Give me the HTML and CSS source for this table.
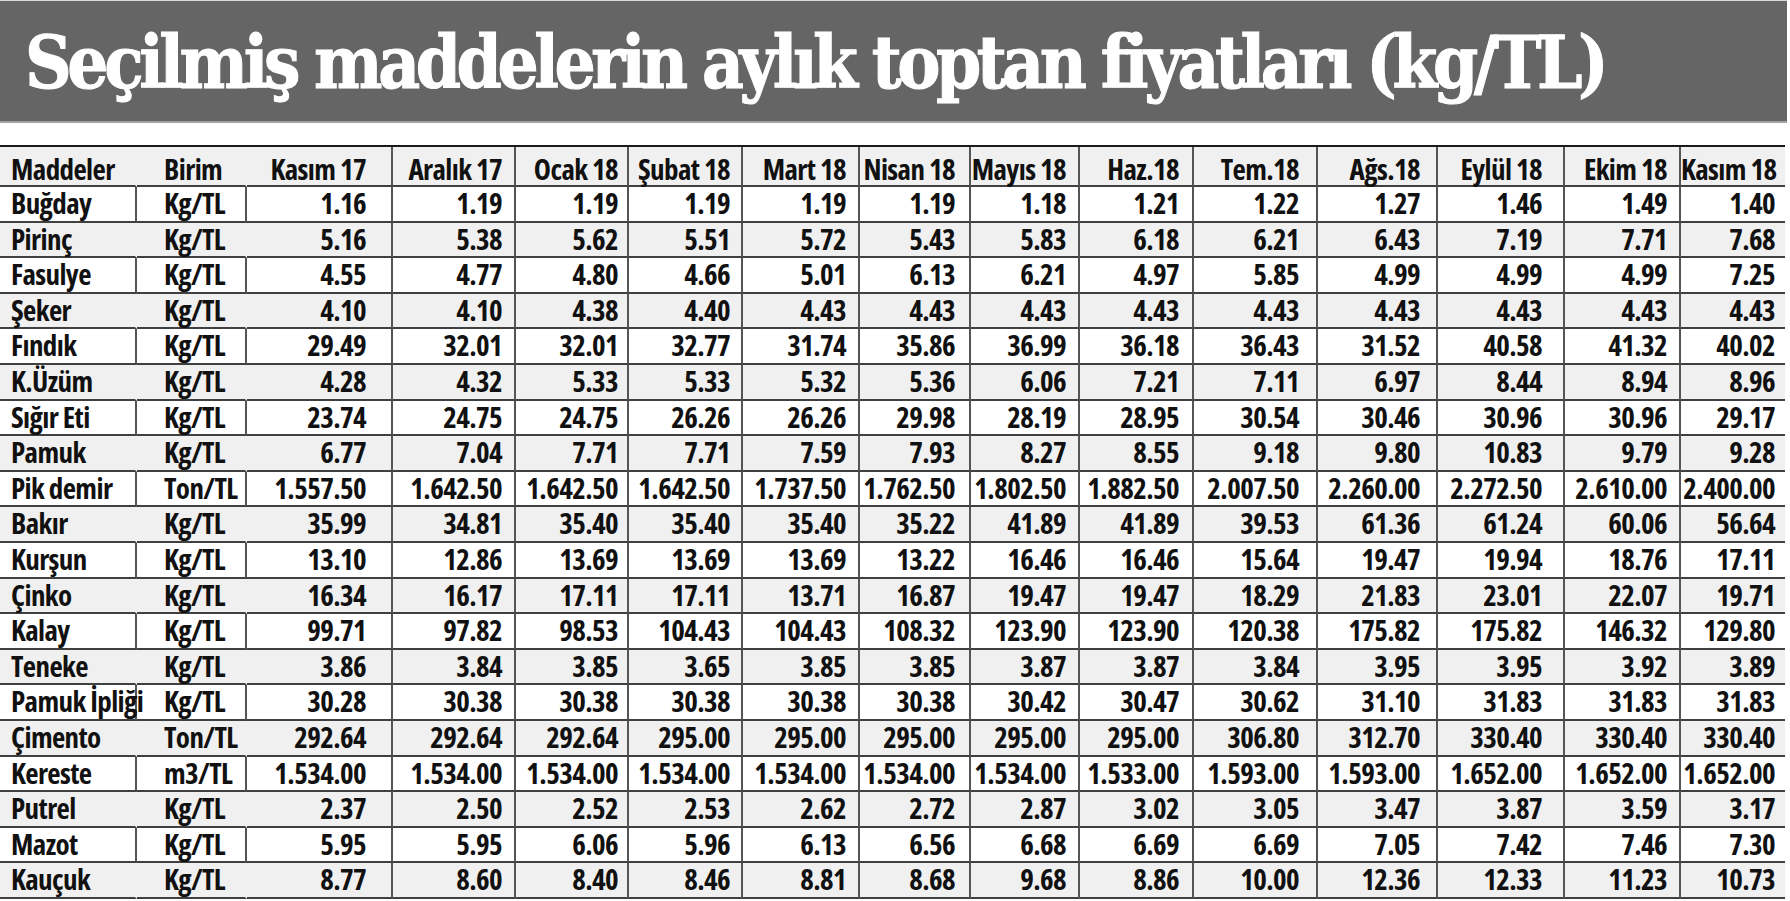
FILE: index.html
```html
<!DOCTYPE html>
<html lang="tr">
<head>
<meta charset="utf-8">
<title>Seçilmiş maddelerin aylık toptan fiyatları (kg/TL)</title>
<link rel="stylesheet" href="styles.css">
</head>
<body>
<div class="page">
  <header class="title-bar">
    <h1 class="title">Seçilmiş maddelerin aylık toptan fiyatları (kg/TL)</h1>
  </header>
  <table class="prices">
    <colgroup>
      <col class="c-name"><col class="c-unit"><col class="c3"><col class="c4"><col class="c5"><col class="c6"><col class="c7"><col class="c8"><col class="c9"><col class="c10"><col class="c11"><col class="c12"><col class="c13"><col class="c14"><col class="c15">
    </colgroup>
    <thead>
      <tr><th>Maddeler</th><th>Birim</th><th>Kasım 17</th><th>Aralık 17</th><th>Ocak 18</th><th>Şubat 18</th><th>Mart 18</th><th>Nisan 18</th><th>Mayıs 18</th><th>Haz.18</th><th>Tem.18</th><th>Ağs.18</th><th>Eylül 18</th><th>Ekim 18</th><th>Kasım 18</th></tr>
    </thead>
    <tbody>
      <tr><td>Buğday</td><td>Kg/TL</td><td>1.16</td><td>1.19</td><td>1.19</td><td>1.19</td><td>1.19</td><td>1.19</td><td>1.18</td><td>1.21</td><td>1.22</td><td>1.27</td><td>1.46</td><td>1.49</td><td>1.40</td></tr>
      <tr><td>Pirinç</td><td>Kg/TL</td><td>5.16</td><td>5.38</td><td>5.62</td><td>5.51</td><td>5.72</td><td>5.43</td><td>5.83</td><td>6.18</td><td>6.21</td><td>6.43</td><td>7.19</td><td>7.71</td><td>7.68</td></tr>
      <tr><td>Fasulye</td><td>Kg/TL</td><td>4.55</td><td>4.77</td><td>4.80</td><td>4.66</td><td>5.01</td><td>6.13</td><td>6.21</td><td>4.97</td><td>5.85</td><td>4.99</td><td>4.99</td><td>4.99</td><td>7.25</td></tr>
      <tr><td>Şeker</td><td>Kg/TL</td><td>4.10</td><td>4.10</td><td>4.38</td><td>4.40</td><td>4.43</td><td>4.43</td><td>4.43</td><td>4.43</td><td>4.43</td><td>4.43</td><td>4.43</td><td>4.43</td><td>4.43</td></tr>
      <tr><td>Fındık</td><td>Kg/TL</td><td>29.49</td><td>32.01</td><td>32.01</td><td>32.77</td><td>31.74</td><td>35.86</td><td>36.99</td><td>36.18</td><td>36.43</td><td>31.52</td><td>40.58</td><td>41.32</td><td>40.02</td></tr>
      <tr><td>K.Üzüm</td><td>Kg/TL</td><td>4.28</td><td>4.32</td><td>5.33</td><td>5.33</td><td>5.32</td><td>5.36</td><td>6.06</td><td>7.21</td><td>7.11</td><td>6.97</td><td>8.44</td><td>8.94</td><td>8.96</td></tr>
      <tr><td>Sığır Eti</td><td>Kg/TL</td><td>23.74</td><td>24.75</td><td>24.75</td><td>26.26</td><td>26.26</td><td>29.98</td><td>28.19</td><td>28.95</td><td>30.54</td><td>30.46</td><td>30.96</td><td>30.96</td><td>29.17</td></tr>
      <tr><td>Pamuk</td><td>Kg/TL</td><td>6.77</td><td>7.04</td><td>7.71</td><td>7.71</td><td>7.59</td><td>7.93</td><td>8.27</td><td>8.55</td><td>9.18</td><td>9.80</td><td>10.83</td><td>9.79</td><td>9.28</td></tr>
      <tr><td>Pik demir</td><td>Ton/TL</td><td>1.557.50</td><td>1.642.50</td><td>1.642.50</td><td>1.642.50</td><td>1.737.50</td><td>1.762.50</td><td>1.802.50</td><td>1.882.50</td><td>2.007.50</td><td>2.260.00</td><td>2.272.50</td><td>2.610.00</td><td>2.400.00</td></tr>
      <tr><td>Bakır</td><td>Kg/TL</td><td>35.99</td><td>34.81</td><td>35.40</td><td>35.40</td><td>35.40</td><td>35.22</td><td>41.89</td><td>41.89</td><td>39.53</td><td>61.36</td><td>61.24</td><td>60.06</td><td>56.64</td></tr>
      <tr><td>Kurşun</td><td>Kg/TL</td><td>13.10</td><td>12.86</td><td>13.69</td><td>13.69</td><td>13.69</td><td>13.22</td><td>16.46</td><td>16.46</td><td>15.64</td><td>19.47</td><td>19.94</td><td>18.76</td><td>17.11</td></tr>
      <tr><td>Çinko</td><td>Kg/TL</td><td>16.34</td><td>16.17</td><td>17.11</td><td>17.11</td><td>13.71</td><td>16.87</td><td>19.47</td><td>19.47</td><td>18.29</td><td>21.83</td><td>23.01</td><td>22.07</td><td>19.71</td></tr>
      <tr><td>Kalay</td><td>Kg/TL</td><td>99.71</td><td>97.82</td><td>98.53</td><td>104.43</td><td>104.43</td><td>108.32</td><td>123.90</td><td>123.90</td><td>120.38</td><td>175.82</td><td>175.82</td><td>146.32</td><td>129.80</td></tr>
      <tr><td>Teneke</td><td>Kg/TL</td><td>3.86</td><td>3.84</td><td>3.85</td><td>3.65</td><td>3.85</td><td>3.85</td><td>3.87</td><td>3.87</td><td>3.84</td><td>3.95</td><td>3.95</td><td>3.92</td><td>3.89</td></tr>
      <tr><td>Pamuk İpliği</td><td>Kg/TL</td><td>30.28</td><td>30.38</td><td>30.38</td><td>30.38</td><td>30.38</td><td>30.38</td><td>30.42</td><td>30.47</td><td>30.62</td><td>31.10</td><td>31.83</td><td>31.83</td><td>31.83</td></tr>
      <tr><td>Çimento</td><td>Ton/TL</td><td>292.64</td><td>292.64</td><td>292.64</td><td>295.00</td><td>295.00</td><td>295.00</td><td>295.00</td><td>295.00</td><td>306.80</td><td>312.70</td><td>330.40</td><td>330.40</td><td>330.40</td></tr>
      <tr><td>Kereste</td><td>m3/TL</td><td>1.534.00</td><td>1.534.00</td><td>1.534.00</td><td>1.534.00</td><td>1.534.00</td><td>1.534.00</td><td>1.534.00</td><td>1.533.00</td><td>1.593.00</td><td>1.593.00</td><td>1.652.00</td><td>1.652.00</td><td>1.652.00</td></tr>
      <tr><td>Putrel</td><td>Kg/TL</td><td>2.37</td><td>2.50</td><td>2.52</td><td>2.53</td><td>2.62</td><td>2.72</td><td>2.87</td><td>3.02</td><td>3.05</td><td>3.47</td><td>3.87</td><td>3.59</td><td>3.17</td></tr>
      <tr><td>Mazot</td><td>Kg/TL</td><td>5.95</td><td>5.95</td><td>6.06</td><td>5.96</td><td>6.13</td><td>6.56</td><td>6.68</td><td>6.69</td><td>6.69</td><td>7.05</td><td>7.42</td><td>7.46</td><td>7.30</td></tr>
      <tr><td>Kauçuk</td><td>Kg/TL</td><td>8.77</td><td>8.60</td><td>8.40</td><td>8.46</td><td>8.81</td><td>8.68</td><td>9.68</td><td>8.86</td><td>10.00</td><td>12.36</td><td>12.33</td><td>11.23</td><td>10.73</td></tr>
    </tbody>
  </table>
</div>
</body>
</html>
```
FILE: styles.css
```css
html, body {
  margin: 0;
  padding: 0;
  background: #ffffff;
}

.page {
  width: 1790px;
  display: flex;
  flex-direction: column;
}

.title-bar {
  box-sizing: border-box;
  width: 1787px;
  height: 123px;
  background: #656565;
  border-top: 1px solid #d8d8d8;
  border-bottom: 2px solid #a3a3a3;
  padding: 26px 0 0 25px;
}

.title {
  margin: 0;
  font-family: "DejaVu Serif Condensed", "DejaVu Serif", serif;
  font-weight: 700;
  font-size: 72px;
  line-height: 72px;
  letter-spacing: -4.42px;
  color: #ffffff;
  -webkit-text-stroke: 1px #ffffff;
  white-space: nowrap;
}

.prices {
  margin-top: 22px;
  width: 1785px;
  table-layout: fixed;
  border-collapse: separate;
  border-spacing: 0;
  border-top: 2px solid #1a1a1a;
  font-family: "Open Sans", "Roboto", sans-serif;
  font-stretch: 75%;
  font-weight: 700;
  font-size: 29px;
  line-height: 32.6px;
  letter-spacing: -0.6px;
  color: #111111;
}

.c-name { width: 137px; }
.c-unit { width: 110px; }
.c3 { width: 146px; }
.c4 { width: 123px; }
.c5 { width: 113px; }
.c6 { width: 114px; }
.c7 { width: 117px; }
.c8 { width: 111px; }
.c9 { width: 109px; }
.c10 { width: 114px; }
.c11 { width: 124px; }
.c12 { width: 120px; }
.c13 { width: 127px; }
.c14 { width: 116px; }
.c15 { width: 104px; }

.prices th,
.prices td {
  box-sizing: border-box;
  padding: 0;
  vertical-align: top;
  text-align: right;
  white-space: nowrap;
  border-bottom: 2px solid #404040;
  border-right: 2px solid #555555;
  font-weight: 700;
}

.prices thead tr { height: 40px; }
.prices tbody tr { height: 35.6px; }

.prices thead th {
  background: #f0f0f0;
  padding-top: 8px;
  line-height: 28px;
}

.prices tbody tr:nth-child(even) td {
  background: #f0f0f0;
}

/* first two columns: left aligned, separators only on white rows */
.prices th:nth-child(1),
.prices td:nth-child(1) {
  text-align: left;
  padding-left: 11px;
}
.prices th:nth-child(2),
.prices td:nth-child(2) {
  text-align: left;
  padding-left: 27px;
}
.prices tbody tr:nth-child(even) td:nth-child(1),
.prices tbody tr:nth-child(even) td:nth-child(2),
.prices thead th:nth-child(1),
.prices thead th:nth-child(2) {
  border-right-color: #f0f0f0;
}

.prices th:nth-child(3), .prices td:nth-child(3) { padding-right: 25px; }
.prices th:nth-child(4), .prices td:nth-child(4) { padding-right: 12px; }
.prices th:nth-child(5), .prices td:nth-child(5) { padding-right: 9px; }
.prices th:nth-child(6), .prices td:nth-child(6) { padding-right: 11px; }
.prices th:nth-child(7), .prices td:nth-child(7) { padding-right: 12px; }
.prices th:nth-child(8), .prices td:nth-child(8) { padding-right: 14px; }
.prices th:nth-child(9), .prices td:nth-child(9) { padding-right: 12px; }
.prices th:nth-child(10), .prices td:nth-child(10) { padding-right: 13px; }
.prices th:nth-child(11), .prices td:nth-child(11) { padding-right: 17px; }
.prices th:nth-child(12), .prices td:nth-child(12) { padding-right: 16px; }
.prices th:nth-child(13), .prices td:nth-child(13) { padding-right: 21px; }
.prices th:nth-child(14), .prices td:nth-child(14) { padding-right: 12px; }
.prices th:nth-child(15), .prices td:nth-child(15) {
  padding-right: 10px;
  border-right: 0;
}
```
